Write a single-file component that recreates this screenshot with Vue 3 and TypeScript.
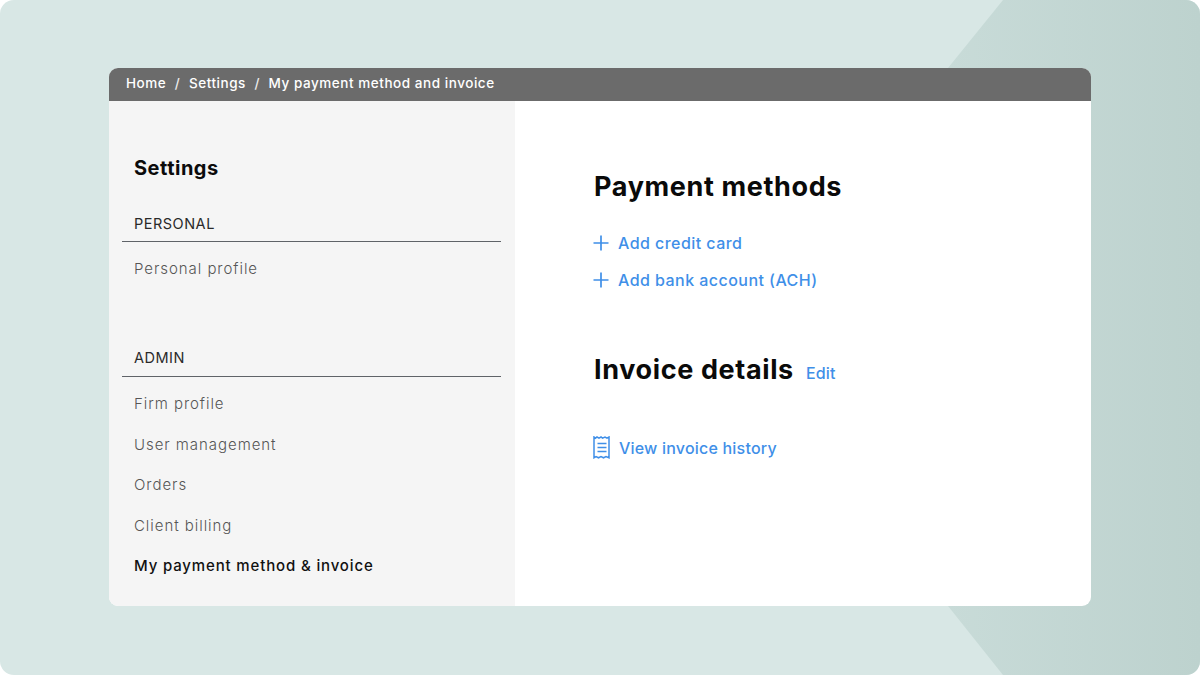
<script setup lang="ts">
const crumbs: string[] = ['Home', 'Settings', 'My payment method and invoice']
const adminLinks: string[] = ['Firm profile', 'User management', 'Orders', 'Client billing']
const addLinks: string[] = ['Add credit card', 'Add bank account (ACH)']
</script>

<template>
  <div class="page">
    <div class="shape"></div>
    <div class="card">
      <nav class="crumbs">
        <template v-for="(c, i) in crumbs" :key="c">
          <span v-if="i > 0" class="sep">/</span>
          <span>{{ c }}</span>
        </template>
      </nav>
      <div class="body">
        <aside class="side">
          <h2 class="side-title">Settings</h2>
          <div class="group-head group-personal">PERSONAL</div>
          <a class="side-link first">Personal profile</a>
          <div class="group-head group-admin">ADMIN</div>
          <a v-for="(l, i) in adminLinks" :key="l" class="side-link" :class="{ first: i === 0 }">{{ l }}</a>
          <a class="side-link active">My payment method &amp; invoice</a>
        </aside>
        <main class="main">
          <h1 class="title">Payment methods</h1>
          <div class="adds">
            <a v-for="l in addLinks" :key="l" class="add">
              <svg class="plus" width="16" height="16" viewBox="0 0 16 16" fill="none" stroke="#3f8fe8" stroke-width="1.7">
                <path d="M8 .5v15M.5 8h15" />
              </svg>
              <span>{{ l }}</span>
            </a>
          </div>
          <div class="invoice-head">
            <h1 class="title">Invoice details</h1>
            <a class="edit">Edit</a>
          </div>
          <a class="history">
            <svg class="receipt" width="18" height="23" viewBox="0 0 18 23" fill="none" stroke="#3f8fe8" stroke-width="1.5">
              <path d="M1 1v20.8l2-1.2 2.5 1.2 2.5-1.2 2.5 1.2 2.5-1.2 3 1.2V1l-2 1.2-2-1.2-2.5 1.2L8 1 6 2.2 4 1 2.5 2.2z" />
              <path d="M4.5 7.5h9M4.5 11.5h9M4.5 15.5h9" />
            </svg>
            <span>View invoice history</span>
          </a>
        </main>
      </div>
    </div>
  </div>
</template>

<style>
html, body { margin: 0; background: #fff; }
</style>

<style scoped>
.page {
  position: relative;
  box-sizing: border-box;
  width: 1200px;
  height: 675px;
  padding: 68px 109px 69px;
  background: #d8e7e5;
  border-radius: 14px;
  overflow: hidden;
  font-family: Inter, "Liberation Sans", sans-serif;
}
.shape {
  position: absolute;
  inset: 0;
  background: linear-gradient(90deg, #c8dbd8 79%, #bdd2ce 100%);
  clip-path: polygon(1003px 0, 1200px 0, 1200px 675px, 1003px 675px, 948px 606px, 948px 68px);
}
.card {
  position: relative;
  display: flex;
  flex-direction: column;
  height: 538px;
  border-radius: 9px;
  overflow: hidden;
  background: #fff;
}
.crumbs {
  display: flex;
  align-items: center;
  gap: 8.5px;
  box-sizing: border-box;
  height: 33px;
  flex: none;
  padding: 0 0 3px 17px;
  background: #6b6b6b;
  color: #fff;
  font-size: 13.5px;
  font-weight: 500;
  letter-spacing: 0.55px;
}
.sep { color: #eee; }
.body { flex: 1; display: flex; min-height: 0; }
.side {
  box-sizing: border-box;
  width: 406px;
  flex: none;
  padding: 53px 14px 0 13px;
  background: #f5f5f5;
}
.side-title {
  margin: 0 0 0 12px;
  font-size: 20px;
  line-height: 28px;
  font-weight: 700;
  letter-spacing: 0.5px;
  color: #0b0b0b;
}
.group-head {
  padding: 0 0 8px 12px;
  font-size: 14.5px;
  line-height: 18px;
  letter-spacing: 0.5px;
  color: #2a2a2a;
  border-bottom: 1px solid #5f6368;
}
.group-personal { margin-top: 33px; }
.group-admin { margin-top: 71px; padding-bottom: 9px; }
.side-link {
  display: block;
  margin-top: 22.5px;
  padding-left: 12px;
  font-size: 15px;
  line-height: 18px;
  letter-spacing: 0.95px;
  font-weight: 300;
  color: #555;
}
.side-link.first { margin-top: 18px; }
.side-link.active { font-weight: 500; color: #111; letter-spacing: 0.85px; }
.main { flex: 1; padding: 69px 0 0 79px; }
.title {
  margin: 0;
  font-size: 27px;
  line-height: 34px;
  font-weight: 700;
  letter-spacing: 0.63px;
  color: #0a0a0a;
}
.adds { display: flex; flex-direction: column; gap: 17px; margin-top: 29px; }
.add, .history, .edit {
  color: #3f8fe8;
  font-weight: 500;
  font-size: 16px;
  line-height: 20px;
  letter-spacing: 0.45px;
}
.add { display: flex; align-items: center; gap: 9px; }
.plus { margin-left: -1px; }
.invoice-head { display: flex; align-items: center; gap: 12px; margin-top: 63px; }
.edit { padding-top: 6px; letter-spacing: 0.2px; }
.history { display: flex; align-items: center; gap: 8px; margin-top: 49px; letter-spacing: 0.2px; }
.receipt { margin-left: -1px; }
</style>
